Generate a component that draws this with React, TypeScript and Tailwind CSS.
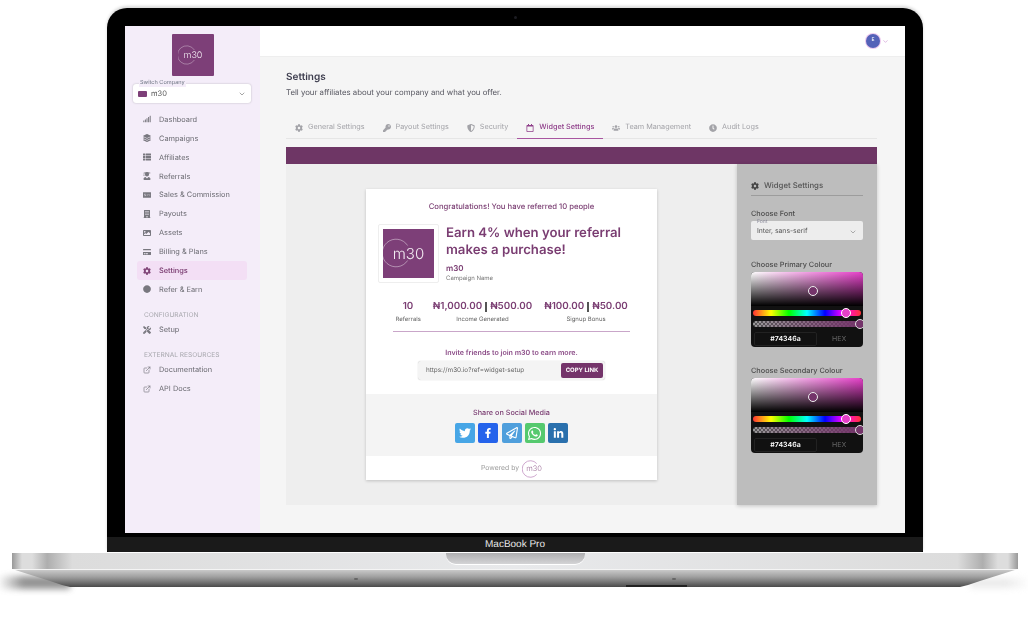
import type { IconType } from "react-icons";
import {
  FaCog,
  FaFacebookF,
  FaKey,
  FaLayerGroup,
  FaLinkedinIn,
  FaMoneyCheckAlt,
  FaRegCalendar,
  FaRegPaperPlane,
  FaSignal,
  FaThList,
  FaTools,
  FaTwitter,
  FaUserGraduate,
  FaUsers,
  FaWhatsapp,
  FaBuilding,
  FaImage,
  FaCreditCard,
  FaCircle,
  FaShieldAlt,
  FaClock,
} from "react-icons/fa";
import { FiChevronDown, FiExternalLink } from "react-icons/fi";

const navItems: { label: string; icon: IconType; active?: boolean }[] = [
  { label: "Dashboard", icon: FaSignal },
  { label: "Campaigns", icon: FaLayerGroup },
  { label: "Affiliates", icon: FaThList },
  { label: "Referrals", icon: FaUserGraduate },
  { label: "Sales & Commission", icon: FaMoneyCheckAlt },
  { label: "Payouts", icon: FaBuilding },
  { label: "Assets", icon: FaImage },
  { label: "Billing & Plans", icon: FaCreditCard },
  { label: "Settings", icon: FaCog, active: true },
  { label: "Refer & Earn", icon: FaCircle },
];

const tabs: { label: string; icon: IconType; active?: boolean }[] = [
  { label: "General Settings", icon: FaCog },
  { label: "Payout Settings", icon: FaKey },
  { label: "Security", icon: FaShieldAlt },
  { label: "Widget Settings", icon: FaRegCalendar, active: true },
  { label: "Team Management", icon: FaUsers },
  { label: "Audit Logs", icon: FaClock },
];

const socials: { icon: IconType; bg: string; size: string }[] = [
  { icon: FaTwitter, bg: "bg-[#47a6e6]", size: "h-[12px] w-[12px]" },
  { icon: FaFacebookF, bg: "bg-[#2563eb]", size: "h-[10px] w-[10px]" },
  { icon: FaRegPaperPlane, bg: "bg-[#4f9fdc]", size: "h-[12px] w-[12px]" },
  { icon: FaWhatsapp, bg: "bg-[#55c96e]", size: "h-[15px] w-[15px]" },
  { icon: FaLinkedinIn, bg: "bg-[#2a70ad]", size: "h-[11px] w-[11px]" },
];

const stats = [
  { values: ["10"], label: "Referrals", width: "w-[25px]" },
  { values: ["₦1,000.00", "₦500.00"], label: "Income Generated", width: "w-[100px]" },
  { values: ["₦100.00", "₦50.00"], label: "Signup Bonus", width: "w-[83px]" },
];

function NavRow({ label, icon: Icon, active }: { label: string; icon: IconType; active?: boolean }) {
  return (
    <div
      className={`ml-3 flex h-[18.9px] w-[110px] items-center gap-[8px] rounded-[3px] pl-[6px] text-[7.4px] ${
        active ? "bg-[#f3dff5] font-medium text-[#74346a]" : "text-[#6b6b72]"
      }`}
    >
      <Icon className="h-[8px] w-[8px] shrink-0 opacity-90" />
      <span>{label}</span>
    </div>
  );
}

function ColourPicker() {
  return (
    <div className="relative h-[75px] w-full overflow-hidden rounded-[4px] bg-[#111]">
      <div className="h-[34px] bg-[linear-gradient(to_bottom,transparent,#000),linear-gradient(to_right,#fff,#e53fc8)]" />
      <div className="absolute left-[57px] top-[14px] h-[10px] w-[10px] rounded-full border border-[#eee] bg-[#74346a]" />
      <div className="mx-[2px] mt-[4px] h-[6px] rounded-full bg-[linear-gradient(to_right,#f33,#ff0,#0f0,#0ff,#00f,#f0f,#f33)]" />
      <div className="absolute left-[90px] top-[36px] h-[10px] w-[10px] rounded-full border border-white bg-[#e53fc8]" />
      <div className="mx-[2px] mt-[5px] h-[6px] rounded-full bg-[linear-gradient(to_right,transparent,#74346a),repeating-conic-gradient(#999_0_25%,#555_0_50%)] bg-[length:100%_100%,4px_4px]" />
      <div className="absolute right-[-2px] top-[47px] h-[10px] w-[10px] rounded-full border border-[#ddd] bg-[#74346a]" />
      <div className="mt-[5px] flex items-center px-[3px]">
        <div className="flex h-[14px] w-[63px] items-center justify-center rounded-[2px] border border-[#222] text-[7px] font-semibold text-white">
          #74346a
        </div>
        <span className="ml-[15px] text-[7px] text-[#666]">HEX</span>
      </div>
    </div>
  );
}

function Widget() {
  return (
    <div className="h-[291px] w-[291px] bg-white text-[#7a3d72] shadow-[0_1px_3px_rgba(0,0,0,0.2)]">
      <p className="pt-[13px] text-center text-[7.7px] font-medium leading-[10px]">
        Congratulations! You have referred 10 people
      </p>
      <div className="mt-[12px] flex px-[12px]">
        <div className="h-[59px] w-[61px] shrink-0 rounded-[2px] border border-[#eee] p-[4px]">
          <div className="relative flex h-full w-full items-center justify-center bg-[#7d3f78] font-light text-white/90">
            <svg viewBox="0 0 100 100" className="absolute left-0 top-[9px] h-[30px] w-[30px]" fill="none">
              <path d="M82 25A46 46 0 1 0 82 75" stroke="#fff" strokeOpacity="0.55" strokeWidth="2.5" />
            </svg>
            <span className="text-[15px] leading-none">m30</span>
          </div>
        </div>
        <div className="ml-[7px] pt-[1px]">
          <h2 className="text-[13.2px] font-semibold leading-[17px]">
            Earn 4% when your referral
            <br />
            makes a purchase!
          </h2>
          <p className="mt-[4px] text-[8px] font-semibold leading-[10px]">m30</p>
          <p className="mt-[2px] text-[6px] leading-[8px] text-[#777]">Campaign Name</p>
        </div>
      </div>
      <div className="mt-[18px] flex justify-center gap-[12px]">
        {stats.map((s) => (
          <div key={s.label} className={`${s.width} text-center`}>
            <div className="flex items-center justify-center gap-[3px] whitespace-nowrap text-[9.8px] font-semibold leading-[12px]">
              {s.values.map((v, i) => (
                <span key={v} className="flex items-center gap-[3px]">
                  {i > 0 && <span className="h-[10px] w-[2px] bg-[#555]" />}
                  {v}
                </span>
              ))}
            </div>
            <div className="mt-[3px] text-[6px] leading-[8px] text-[#666]">{s.label}</div>
          </div>
        ))}
      </div>
      <div className="mx-[27px] mt-[7px] h-px bg-[#c9a6c9]" />
      <p className="mt-[16px] text-center text-[7.1px] font-semibold leading-[10px] text-[#8a4a86]">
        Invite friends to join m30 to earn more.
      </p>
      <div className="mx-[52px] mt-[3px] flex h-[19px] items-center justify-between rounded-[3px] bg-[#f4f4f4] pl-[8px] pr-[2px] shadow-[0_0_1px_rgba(0,0,0,0.3)]">
        <span className="text-[6.4px] text-[#666]">https://m30.io?ref=widget-setup</span>
        <span className="flex h-[15px] w-[42px] items-center justify-center rounded-[2px] bg-[#74346a] text-[6px] font-bold text-white">
          COPY LINK
        </span>
      </div>
      <div className="mt-[14px] h-[62px] bg-[#f4f4f4] pt-[14px]">
        <p className="text-center text-[7.25px] font-medium leading-[10px]">Share on Social Media</p>
        <div className="mt-[5px] flex justify-center gap-[3.4px]">
          {socials.map(({ icon: Icon, bg, size }, i) => (
            <div key={i} className={`flex h-[20px] w-[20px] items-center justify-center rounded-[2px] ${bg}`}>
              <Icon className={`${size} text-white`} />
            </div>
          ))}
        </div>
      </div>
      <div className="flex h-[24px] items-center justify-center gap-[3px] pt-[1px] text-[6.8px] text-[#999]">
        <span>Powered by</span>
        <span className="relative flex h-[20px] w-[20px] items-center justify-end text-[7.5px] font-light text-[#9a6a96]">
          <svg viewBox="0 0 100 100" className="absolute left-0 top-[1px] h-[18px] w-[18px]" fill="none">
            <path d="M82 20A46 46 0 1 0 82 80" stroke="#c99fc9" strokeWidth="5" />
          </svg>
          m30
        </span>
      </div>
    </div>
  );
}

export default function App() {
  return (
    <div className="relative flex h-[621px] w-[1028px] flex-col items-center overflow-hidden bg-white pl-[2px] pt-[8px] [font-family:Inter,sans-serif] [text-rendering:geometricPrecision]">
      {/* lid */}
      <div className="relative z-10 flex h-[544px] w-[816px] flex-col rounded-t-[20px] bg-black shadow-[0_-2px_3px_rgba(0,0,0,0.15)]">
        <div className="flex h-[18px] shrink-0 items-center justify-center">
          <div className="h-[3px] w-[3px] rounded-full bg-[#1c1c22]" />
        </div>
        <div className="mx-[18px] flex h-[507px] overflow-hidden bg-[#f5f5f5] blur-[0.5px]">
          <aside className="w-[135px] shrink-0 bg-[#f4edf9] pt-[8px]">
            <div className="relative mx-auto flex h-[42px] w-[42px] items-center justify-center rounded-[1px] bg-[#7d3f78] pl-[1px] font-light text-white/90">
              <svg viewBox="0 0 100 100" className="absolute left-[6px] top-[11px] h-[20px] w-[20px]" fill="none">
                <path d="M82 25A46 46 0 1 0 82 75" stroke="#fff" strokeOpacity="0.55" strokeWidth="3" />
              </svg>
              <span className="text-[9px] leading-none">m30</span>
            </div>
            <div className="relative ml-[8px] mr-[9px] mt-[8px] flex h-[19px] items-center rounded-[3px] bg-white px-[5px] shadow-[0_0_2px_rgba(0,0,0,0.25)]">
              <span className="absolute left-[6px] top-[-4px] bg-[#f4edf9] px-px text-[5.6px] leading-[7px] text-[#6b7280]">
                Switch Company
              </span>
              <span className="h-[6px] w-[9px] rounded-[1px] bg-[#7d3f78]" />
              <span className="ml-[4px] text-[7.5px] text-[#555]">m30</span>
              <FiChevronDown className="ml-auto h-[8px] w-[8px] text-[#777]" />
            </div>
            <nav className="mt-[7px]">
              {navItems.map((n) => (
                <NavRow key={n.label} {...n} />
              ))}
            </nav>
            <p className="ml-[19px] mt-[12.5px] text-[6.6px] leading-[9px] text-[#a8a8ae]">CONFIGURATION</p>
            <NavRow label="Setup" icon={FaTools} />
            <p className="ml-[19px] mb-[0.5px] mt-[10.5px] text-[6.6px] leading-[10px] text-[#a8a8ae]">EXTERNAL RESOURCES</p>
            <NavRow label="Documentation" icon={FiExternalLink} />
            <NavRow label="API Docs" icon={FiExternalLink} />
          </aside>
          <main className="min-w-0 flex-1">
            <header className="flex h-[31px] items-center justify-end border-b border-[#eee] bg-white pr-[16px]">
              <div className="flex h-[14px] w-[14px] items-center justify-center rounded-full bg-[#5462b8] text-[5px] text-white shadow-[0_0_0_1px_#edc9ee]">
                E
              </div>
              <FiChevronDown className="ml-[2px] h-[7px] w-[7px] text-[#c98fd0]" />
            </header>
            <div className="pl-[26px] pr-[28px] pt-[14px]">
              <h1 className="text-[10px] font-semibold leading-[12px] text-[#3d3d4e]">Settings</h1>
              <p className="mt-[3px] text-[7.8px] leading-[12px] text-[#55555f]">
                Tell your affiliates about your company and what you offer.
              </p>
              <div className="mt-[19px] flex h-[22px] border-b border-[#e6e6e6]">
                {tabs.map(({ label, icon: Icon, active }) => (
                  <div
                    key={label}
                    className={`-mb-px flex items-center gap-[5px] border-b px-[9px] text-[7.25px] ${
                      active
                        ? "border-[#a855a0] font-medium text-[#8f3f8a]"
                        : "border-transparent text-[#a3a3a8]"
                    }`}
                  >
                    <Icon className="h-[8px] w-[8px]" />
                    <span className="whitespace-nowrap">{label}</span>
                  </div>
                ))}
              </div>
              <div className="mt-[8px] h-[17px] bg-[#6e3665]" />
              <div className="flex h-[341px]">
                <div className="flex-1 bg-[#eeeeee] pl-[80px] pt-[25px]">
                  <Widget />
                </div>
                <div className="w-[140px] bg-[#bdbdbd] px-[14px] pt-[16px] shadow-[0_1px_4px_rgba(0,0,0,0.2)]">
                  <div className="flex h-[16px] items-center gap-[5px] border-b border-[#9c9c9c] pb-[4px] text-[7.8px] font-medium text-[#555]">
                    <FaCog className="h-[8px] w-[8px] text-[#444]" />
                    Widget Settings
                  </div>
                  <p className="mt-[13px] text-[7.3px] font-medium leading-[10px] text-[#4b4b4b]">Choose Font</p>
                  <div className="relative mt-[2px] flex h-[19px] items-center rounded-[2px] bg-[#ededed] px-[6px] pt-[2px] text-[6.8px] text-[#555]">
                    <span className="absolute left-[6px] top-[-2px] text-[5px] leading-[6px] text-[#8a8a9a]">Font</span>
                    Inter, sans-serif
                    <FiChevronDown className="ml-auto h-[8px] w-[8px] text-[#888]" />
                  </div>
                  <p className="mt-[20px] text-[7.3px] font-medium leading-[10px] text-[#4b4b4b]">Choose Primary Colour</p>
                  <div className="mt-[2px]">
                    <ColourPicker />
                  </div>
                  <p className="mt-[19px] text-[7.3px] font-medium leading-[10px] text-[#4b4b4b]">Choose Secondary Colour</p>
                  <div className="mt-[2px]">
                    <ColourPicker />
                  </div>
                </div>
              </div>
            </div>
          </main>
        </div>
        <div className="mt-[4px] flex h-[15px] flex-1 items-center justify-center rounded-b-[2px] bg-[#1a1a1a] text-[10px] leading-none text-[#e8e8e8] [font-family:'Liberation_Sans',sans-serif]">
          MacBook Pro
        </div>
      </div>
      {/* base */}
      <div className="relative w-[1006px]">
        <div className="absolute left-[-14px] top-[24px] h-[13px] w-[72px] bg-[linear-gradient(to_right,transparent,#666_35%,#666)] opacity-70 blur-[3px]" />
        <div className="absolute right-[-12px] top-[26px] h-[10px] w-[60px] bg-[linear-gradient(to_left,transparent,#ddd_40%,#ddd)] opacity-60 blur-[3px]" />
        <div className="relative flex h-[17px] justify-center border-t border-white bg-[linear-gradient(to_right,#999,#ddd_1%,#ddd_2%,#aeaeae_3.5%,#dcdcdc_6%,#e8e9eb_50%,#dcdcdc_94%,#aeaeae_96.5%,#ddd_98%,#ddd_99%,#999)]">
          <div className="h-[11px] w-[139px] rounded-b-[10px] bg-[linear-gradient(to_bottom,#aeaeb0,#d4d4d6)] shadow-[0_1px_0_#fff]" />
        </div>
        <div className="relative h-[18px] border-t border-[#f4f4f4] bg-[linear-gradient(to_bottom,#c9c9c9,#a0a0a0_40%,#777_70%,#4a4a4a)] [clip-path:polygon(0_0,100%_0,calc(100%_-_38px)_12px,calc(100%_-_50px)_16px,calc(100%_-_58px)_18px,58px_18px,50px_16px,38px_12px)]" />
        <div className="absolute left-[342px] top-[26px] h-[2px] w-[4px] rounded-full bg-[#666]" />
        <div className="absolute left-[660px] top-[26px] h-[2px] w-[4px] rounded-full bg-[#666]" />
        <div className="absolute left-[614px] top-[33px] h-[2px] w-[61px] bg-[#222]" />
      </div>
    </div>
  );
}
